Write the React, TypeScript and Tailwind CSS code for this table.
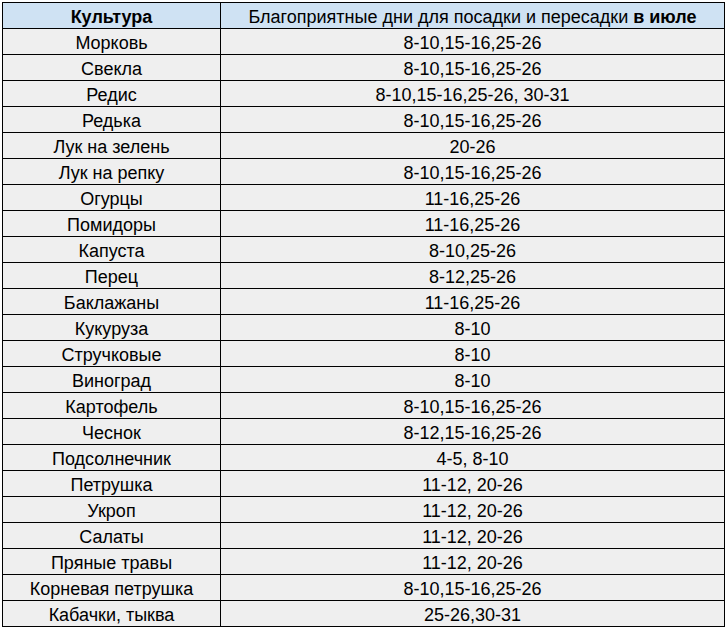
import React from "react";

const rows: [string, string][] = [
  ["Морковь", "8-10,15-16,25-26"],
  ["Свекла", "8-10,15-16,25-26"],
  ["Редис", "8-10,15-16,25-26, 30-31"],
  ["Редька", "8-10,15-16,25-26"],
  ["Лук на зелень", "20-26"],
  ["Лук на репку", "8-10,15-16,25-26"],
  ["Огурцы", "11-16,25-26"],
  ["Помидоры", "11-16,25-26"],
  ["Капуста", "8-10,25-26"],
  ["Перец", "8-12,25-26"],
  ["Баклажаны", "11-16,25-26"],
  ["Кукуруза", "8-10"],
  ["Стручковые", "8-10"],
  ["Виноград", "8-10"],
  ["Картофель", "8-10,15-16,25-26"],
  ["Чеснок", "8-12,15-16,25-26"],
  ["Подсолнечник", "4-5, 8-10"],
  ["Петрушка", "11-12, 20-26"],
  ["Укроп", "11-12, 20-26"],
  ["Салаты", "11-12, 20-26"],
  ["Пряные травы", "11-12, 20-26"],
  ["Корневая петрушка", "8-10,15-16,25-26"],
  ["Кабачки, тыква", "25-26,30-31"],
];

const cell =
  "h-[26px] border-r border-b border-black flex items-end justify-center pb-[2px] whitespace-nowrap";

export default function App() {
  return (
    <div className="w-[728px] h-[629px] bg-white pt-[2px] pl-[2px] text-black font-['Liberation_Sans',Arial,sans-serif]">
      <div className="w-[723px] border-l border-t border-black text-[18px] leading-[18px]">
        <div className="flex bg-[#cfe2f3]">
          <div className={`w-[218px] font-bold ${cell}`}>Культура</div>
          <div className={`w-[504px] ${cell}`}>
            <span>
              Благоприятные дни для посадки и пересадки <b>в июле</b>
            </span>
          </div>
        </div>
        {rows.map(([a, b]) => (
          <div key={a} className="flex bg-[#efefef]">
            <div className={`w-[218px] ${cell}`}>{a}</div>
            <div className={`w-[504px] ${cell}`}>{b}</div>
          </div>
        ))}
      </div>
    </div>
  );
}
